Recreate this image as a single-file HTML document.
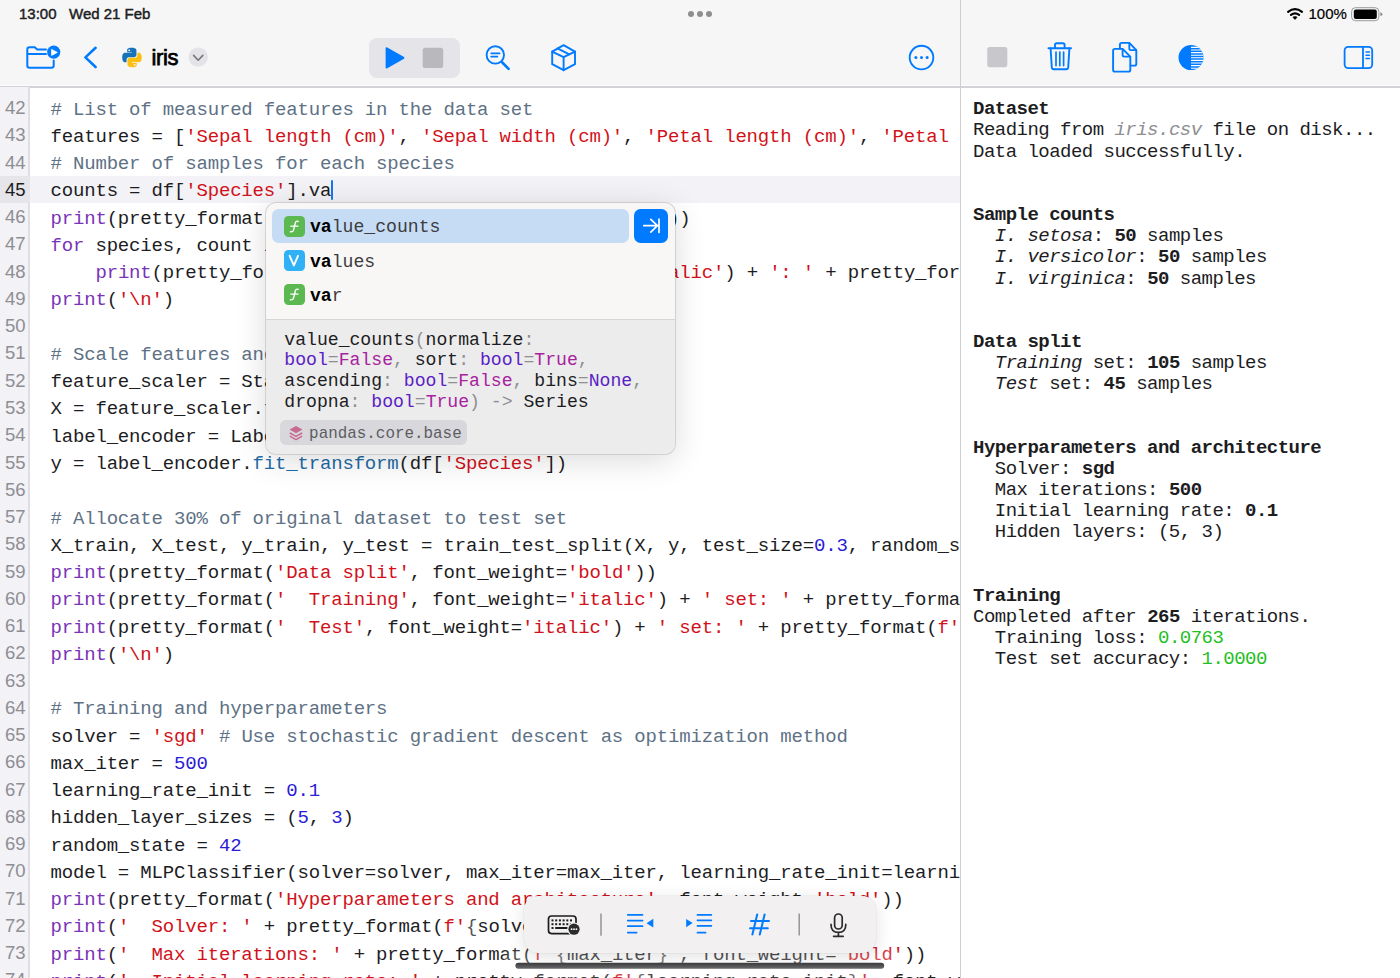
<!DOCTYPE html>
<html><head><meta charset="utf-8">
<style>
*{margin:0;padding:0;box-sizing:border-box}
html,body{width:1400px;height:978px;overflow:hidden;background:#fff}
body{position:relative;font-family:"Liberation Sans",sans-serif;color:#1d1d1f}
.abs{position:absolute}
#hdr{position:absolute;left:0;top:0;width:1400px;height:86px;background:#f6f6f6}
#hdrline{position:absolute;left:0;top:86px;width:1400px;height:1.6px;background:#d3d3d7;border-top:0}
#hdrw{position:absolute;left:0;top:85px;width:1400px;height:1px;background:#fdfdfd}
#vdiv{position:absolute;left:960px;top:0;width:1px;height:978px;background:#cfcfcf}
#gutter{position:absolute;left:0;top:87px;width:28px;height:891px;background:#f2f2f7}
#gutline{position:absolute;left:28px;top:87px;width:2px;height:891px;background:#dedee3}
#curline{position:absolute;left:30px;top:176px;width:930px;height:27px;background:#f2f2f7}
#curgut{position:absolute;left:0;top:176px;width:30px;height:27px;background:#e5e5ea}
#code{position:absolute;left:0;top:0;width:960px;height:978px;overflow:hidden}
.ln{position:absolute;left:50.5px;white-space:pre;font-family:"Liberation Mono",monospace;font-size:19px;letter-spacing:-0.175px;line-height:27.29px;height:27.29px;color:#1d1d1f}
.gn{position:absolute;left:0;width:25.5px;margin-top:-2.5px;text-align:right;font-family:"Liberation Sans",sans-serif;font-size:18.5px;line-height:27.29px;color:#8e8e93}
.gn.cur{color:#1c1c1e}
.cm{color:#5e7185}
.st{color:#d1121a}
.kw{color:#7933b8}
.nu{color:#2a1bd6}
.fn{color:#1f6aa5}
.br{color:#555}
#out{position:absolute;left:961px;top:87px;width:439px;height:891px;overflow:hidden}
.ol{position:absolute;left:12px;white-space:pre;font-family:"Liberation Mono",monospace;font-size:19px;letter-spacing:-0.52px;line-height:21.115px;color:#1d1d1f}
.ol b{font-weight:bold}
.ol i{font-style:italic}
.ol i.g{color:#8e8e93}
.ol .gr{color:#1fbf24}
.st-text{position:absolute;font-size:15px;font-weight:normal;-webkit-text-stroke:0.45px #1d1d1f;color:#1d1d1f;top:5px}

#popup{position:absolute;left:265.5px;top:202.5px;width:409.5px;height:251.5px;border-radius:10px;background:#f8f7f6;box-shadow:0 0 0 0.8px rgba(0,0,0,0.15),0 6px 32px rgba(0,0,0,0.15);overflow:hidden}
#popdoc{position:absolute;left:0;top:116px;width:100%;height:136px;background:#ececec;border-top:1px solid #d6d6d6}
.pi{position:absolute;font-family:"Liberation Mono",monospace;font-size:18.13px;line-height:22px;white-space:pre;color:#3c3c3f}
.pi b{color:#000;font-weight:bold}
.pic{position:absolute;width:21px;height:21px;border-radius:4.5px;color:#fff;text-align:center}
.sig{position:absolute;left:18.8px;font-family:"Liberation Mono",monospace;font-size:18.13px;line-height:20.7px;white-space:pre;color:#1d1d1f}
.sig .g{color:#8e8e93}.sig .t{color:#5a1ec4}.sig .v{color:#a8229e}
#kbd{position:absolute;left:523.6px;top:896.1px;width:352.8px;height:56.6px;border-radius:14px;background:#f2f0f0;box-shadow:0 0 0 0.5px rgba(0,0,0,0.06),0 4px 18px rgba(0,0,0,0.12)}
</style></head><body>
<div id="hdr"></div>
<div id="hdrw"></div><div id="hdrline"></div>

<svg class="abs" style="left:0;top:0" width="1400" height="86" viewBox="0 0 1400 86">
<g fill="none" stroke="#007aff" stroke-width="2" stroke-linecap="round" stroke-linejoin="round">
 <!-- folder -->
 <path d="M46 49.6 H37.3 L34.8 47.2 H29.5 Q27.3 47.2 27.3 49.4 V65.6 Q27.3 67.8 29.5 67.8 H51.5 Q53.7 67.8 53.7 65.6 V60.5"/>
 <path d="M27.8 54 H46"/>
 <!-- back chevron -->
 <path d="M95.6 47.8 L85.4 57.4 L95.6 67" stroke-width="2.6"/>
 <!-- magnifier -->
 <circle cx="495.3" cy="54.9" r="8.7" stroke-width="1.9"/>
 <path d="M491.2 53.3 H499.6 M491.2 56.7 H497.4" stroke-width="1.7"/>
 <path d="M502.3 62.5 L508.6 68.8" stroke-width="2.6"/>
 <!-- cube -->
 <path d="M563.6 45.2 L575 51.6 V64.2 L563.6 70.2 L552.2 64.2 V51.6 Z" stroke-width="1.9"/>
 <path d="M552.2 51.6 L563.6 57.2 L575 51.6 M563.6 57.2 V70.2" stroke-width="1.9"/>
 <path d="M557.5 48.4 L569.3 54.3" stroke-width="1.9"/>
 <!-- ellipsis circle -->
 <circle cx="921.5" cy="57.6" r="11.8" stroke-width="1.9"/>
 <!-- trash -->
 <path d="M1048.5 48.2 H1071" stroke-width="2"/>
 <path d="M1055 48 V45 Q1055 43.2 1056.8 43.2 H1062.8 Q1064.6 43.2 1064.6 45 V48" stroke-width="1.9"/>
 <path d="M1050.6 48.5 L1051.8 67.4 Q1052 69.2 1053.8 69.2 H1066.2 Q1068 69.2 1068.2 67.4 L1069.4 48.5" stroke-width="1.9"/>
 <path d="M1056 52 V65.6 M1059.8 52 V65.6 M1063.6 52 V65.6" stroke-width="1.7"/>
 <!-- copy -->
 <path d="M1130.6 65.6 H1134.4 Q1136.3 65.6 1136.3 63.7 V50.2 L1129.3 42.9 H1121.8 Q1119.9 42.9 1119.9 44.8 V48.6" stroke-width="1.9"/>
 <path d="M1129.3 43.2 V48.6 Q1129.3 50.2 1130.9 50.2 H1136" stroke-width="1.8"/>
 <path d="M1115 48.9 H1122.6 L1130.3 56.6 V69.7 Q1130.3 71.6 1128.4 71.6 H1115 Q1113.1 71.6 1113.1 69.7 V50.8 Q1113.1 48.9 1115 48.9 Z" stroke-width="1.9"/>
 <path d="M1122.6 49.2 V55 Q1122.6 56.6 1124.2 56.6 H1130" stroke-width="1.8"/>
 <!-- sidebar -->
 <rect x="1344.6" y="46.8" width="27.6" height="21.4" rx="3.6" stroke-width="1.8"/>
 <path d="M1363 47 V68" stroke-width="1.8"/>
 <path d="M1366 51.9 H1369.4 M1366 55.3 H1369.4 M1366 58.6 H1369.4" stroke-width="1.5"/>
</g>
<!-- folder badge -->
<circle cx="53.7" cy="52.1" r="6.6" fill="#007aff"/>
<path d="M51.6 49.4 L57.3 52.4 L51.6 55.4 Z" fill="#fff" stroke="#fff" stroke-width="0.8" stroke-linejoin="round"/>
<!-- ellipsis dots -->
<circle cx="915.9" cy="57.6" r="1.5" fill="#007aff"/><circle cx="921.5" cy="57.6" r="1.5" fill="#007aff"/><circle cx="927.1" cy="57.6" r="1.5" fill="#007aff"/>
<!-- python logo -->
<g transform="translate(122.2 47.8) scale(0.195)">
 <path fill="#1673b9" d="M49 0C24 0 25.5 11 25.5 11V22.5H49.5V26H16C16 26 0 24 0 49.5S14 74 14 74H22.5V62S22 48.5 36 48.5H60S73 48.7 73 36V14S75 0 49 0ZM36 8.5A4.3 4.3 0 1 1 36 17 4.3 4.3 0 1 1 36 8.5Z"/>
 <path fill="#fdbf12" d="M51 100C76 100 74.5 89 74.5 89V77.5H50.5V74H84C84 74 100 76 100 50.5S86 26 86 26H77.5V38S78 51.5 64 51.5H40S27 51.3 27 64V86S25 100 51 100ZM64 91.5A4.3 4.3 0 1 1 64 83 4.3 4.3 0 1 1 64 91.5Z"/>
</g>
<!-- chevron circle -->
<circle cx="198.2" cy="57.1" r="9.7" fill="#e3e3e8"/>
<path d="M193.6 55.4 L198.2 60.2 L202.8 55.4" fill="none" stroke="#77777c" stroke-width="1.6" stroke-linecap="round" stroke-linejoin="round"/>
<!-- run group -->
<rect x="369" y="38" width="91" height="40" rx="8" fill="#e4e4e9"/>
<path d="M387.3 47.6 L404 57.1 Q405 57.9 404 58.7 L387.3 68.2 Q385.6 69 385.6 67.2 V48.6 Q385.6 46.8 387.3 47.6 Z" fill="#007aff"/>
<rect x="422.7" y="47.7" width="20.5" height="20.3" rx="2.5" fill="#b9b9bd"/>
<!-- right panel stop -->
<rect x="987.3" y="47" width="20" height="20.3" rx="2.5" fill="#c7c7cc"/>
<!-- contrast -->
<defs><clipPath id="cc"><circle cx="1191" cy="57.6" r="12.5"/></clipPath></defs>
<g clip-path="url(#cc)">
 <rect x="1178" y="44" width="26" height="28" fill="#007aff"/>
 <path d="M1191 47.4 H1205 M1191 50.0 H1205 M1191 52.6 H1205 M1191 55.2 H1205 M1191 57.8 H1205 M1191 60.4 H1205 M1191 63.0 H1205 M1191 65.6 H1205 M1191 68.2 H1205" stroke="#fff" stroke-width="1.1"/>
</g>
<!-- wifi -->
<path d="M1292.9 17.1 Q1295 15.9 1297.1 17.1 L1295.4 19.2 Q1295 19.6 1294.6 19.2 Z" fill="#000" stroke="#000" stroke-width="0.6" stroke-linejoin="round"/>
<path d="M1291 14.8 Q1295 11.8 1299.1 14.8" fill="none" stroke="#000" stroke-width="2.2" stroke-linecap="round"/>
<path d="M1288.1 11.8 Q1295 6.4 1302 11.8" fill="none" stroke="#000" stroke-width="2.2" stroke-linecap="round"/>
<!-- battery -->
<rect x="1351.6" y="7.7" width="27.3" height="13" rx="3.8" fill="none" stroke="#9a9a9a" stroke-width="1"/>
<rect x="1353.8" y="9.6" width="23" height="9.3" rx="2" fill="#000"/>
<path d="M1380.4 12.3 Q1382.4 12.6 1382.4 14.2 Q1382.4 15.8 1380.4 16.1 Z" fill="#8a8a8a"/>
</svg>
<div class="abs" style="left:151.5px;top:44.5px;font-size:22px;font-weight:normal;letter-spacing:-0.35px;-webkit-text-stroke:0.75px #000;color:#000">iris</div>
<div class="st-text" style="left:1308.5px;font-size:15px;color:#000;-webkit-text-stroke:0.2px #000">100%</div>

<!-- status bar -->
<div class="st-text" style="left:19px">13:00</div>
<div class="st-text" style="left:69px">Wed 21 Feb</div>
<div class="abs" style="left:688px;top:11px;width:6px;height:6px;border-radius:3px;background:#8e8e8e"></div>
<div class="abs" style="left:697px;top:11px;width:6px;height:6px;border-radius:3px;background:#8e8e8e"></div>
<div class="abs" style="left:706px;top:11px;width:6px;height:6px;border-radius:3px;background:#8e8e8e"></div>

<div id="code">
<div id="gutter"></div>
<div id="gutline"></div>
<div id="curgut"></div>
<div id="curline"></div>
<div class="gn" style="top:96.60px">42</div>
<div class="gn" style="top:123.86px">43</div>
<div class="gn" style="top:151.12px">44</div>
<div class="gn cur" style="top:178.39px">45</div>
<div class="gn" style="top:205.65px">46</div>
<div class="gn" style="top:232.91px">47</div>
<div class="gn" style="top:260.17px">48</div>
<div class="gn" style="top:287.43px">49</div>
<div class="gn" style="top:314.70px">50</div>
<div class="gn" style="top:341.96px">51</div>
<div class="gn" style="top:369.22px">52</div>
<div class="gn" style="top:396.48px">53</div>
<div class="gn" style="top:423.74px">54</div>
<div class="gn" style="top:451.01px">55</div>
<div class="gn" style="top:478.27px">56</div>
<div class="gn" style="top:505.53px">57</div>
<div class="gn" style="top:532.79px">58</div>
<div class="gn" style="top:560.05px">59</div>
<div class="gn" style="top:587.32px">60</div>
<div class="gn" style="top:614.58px">61</div>
<div class="gn" style="top:641.84px">62</div>
<div class="gn" style="top:669.10px">63</div>
<div class="gn" style="top:696.36px">64</div>
<div class="gn" style="top:723.63px">65</div>
<div class="gn" style="top:750.89px">66</div>
<div class="gn" style="top:778.15px">67</div>
<div class="gn" style="top:805.41px">68</div>
<div class="gn" style="top:832.67px">69</div>
<div class="gn" style="top:859.94px">70</div>
<div class="gn" style="top:887.20px">71</div>
<div class="gn" style="top:914.46px">72</div>
<div class="gn" style="top:941.72px">73</div>
<div class="gn" style="top:968.98px">74</div>
<div class="ln" style="top:96.60px"><span class="cm"># List of measured features in the data set</span></div>
<div class="ln" style="top:123.86px">features = [<span class="st">'Sepal length (cm)'</span>, <span class="st">'Sepal width (cm)'</span>, <span class="st">'Petal length (cm)'</span>, <span class="st">'Petal width (cm)'</span>]</div>
<div class="ln" style="top:151.12px"><span class="cm"># Number of samples for each species</span></div>
<div class="ln" style="top:178.39px">counts = df[<span class="st">'Species'</span>].va</div>
<div class="ln" style="top:205.65px"><span class="kw">print</span>(pretty_format(<span class="st">'Sample counts'</span>, font_weight=<span class="st">'bold'</span>))</div>
<div class="ln" style="top:232.91px"><span class="kw">for</span> species, count <span class="kw">in</span> counts.items():</div>
<div class="ln" style="top:260.17px">    <span class="kw">print</span>(pretty_format(<span class="st">f'</span><span class="st">I.</span><span class="br">{</span>species<span class="br">}</span><span class="st">'</span>, font_weight=<span class="st">'italic'</span>) + <span class="st">': '</span> + pretty_format(<span class="st">f'</span><span class="br">{</span>count<span class="br">}</span><span class="st">'</span>, font_weight=<span class="st">'bold'</span>) + <span class="st">' samples'</span>)</div>
<div class="ln" style="top:287.43px"><span class="kw">print</span>(<span class="st">'\n'</span>)</div>
<div class="ln" style="top:314.70px"></div>
<div class="ln" style="top:341.96px"><span class="cm"># Scale features and encode labels</span></div>
<div class="ln" style="top:369.22px">feature_scaler = StandardScaler()</div>
<div class="ln" style="top:396.48px">X = feature_scaler.<span class="fn">fit_transform</span>(df[features])</div>
<div class="ln" style="top:423.74px">label_encoder = LabelEncoder()</div>
<div class="ln" style="top:451.01px">y = label_encoder.<span class="fn">fit_transform</span>(df[<span class="st">'Species'</span>])</div>
<div class="ln" style="top:478.27px"></div>
<div class="ln" style="top:505.53px"><span class="cm"># Allocate 30% of original dataset to test set</span></div>
<div class="ln" style="top:532.79px">X_train, X_test, y_train, y_test = train_test_split(X, y, test_size=<span class="nu">0.3</span>, random_state=random_state)</div>
<div class="ln" style="top:560.05px"><span class="kw">print</span>(pretty_format(<span class="st">'Data split'</span>, font_weight=<span class="st">'bold'</span>))</div>
<div class="ln" style="top:587.32px"><span class="kw">print</span>(pretty_format(<span class="st">'  Training'</span>, font_weight=<span class="st">'italic'</span>) + <span class="st">' set: '</span> + pretty_format(<span class="st">f'</span><span class="br">{</span>len(X_train)<span class="br">}</span><span class="st">'</span>, font_weight=<span class="st">'bold'</span>) + <span class="st">' samples'</span>)</div>
<div class="ln" style="top:614.58px"><span class="kw">print</span>(pretty_format(<span class="st">'  Test'</span>, font_weight=<span class="st">'italic'</span>) + <span class="st">' set: '</span> + pretty_format(<span class="st">f'</span><span class="br">{</span>len(X_test)<span class="br">}</span><span class="st">'</span>, font_weight=<span class="st">'bold'</span>) + <span class="st">' samples'</span>)</div>
<div class="ln" style="top:641.84px"><span class="kw">print</span>(<span class="st">'\n'</span>)</div>
<div class="ln" style="top:669.10px"></div>
<div class="ln" style="top:696.36px"><span class="cm"># Training and hyperparameters</span></div>
<div class="ln" style="top:723.63px">solver = <span class="st">'sgd'</span> <span class="cm"># Use stochastic gradient descent as optimization method</span></div>
<div class="ln" style="top:750.89px">max_iter = <span class="nu">500</span></div>
<div class="ln" style="top:778.15px">learning_rate_init = <span class="nu">0.1</span></div>
<div class="ln" style="top:805.41px">hidden_layer_sizes = (<span class="nu">5</span>, <span class="nu">3</span>)</div>
<div class="ln" style="top:832.67px">random_state = <span class="nu">42</span></div>
<div class="ln" style="top:859.94px">model = MLPClassifier(solver=solver, max_iter=max_iter, learning_rate_init=learning_rate_init, hidden_layer_sizes=hidden_layer_sizes)</div>
<div class="ln" style="top:887.20px"><span class="kw">print</span>(pretty_format(<span class="st">'Hyperparameters and architecture'</span>, font_weight=<span class="st">'bold'</span>))</div>
<div class="ln" style="top:914.46px"><span class="kw">print</span>(<span class="st">'  Solver: '</span> + pretty_format(<span class="st">f'</span><span class="br">{</span>solver<span class="br">}</span><span class="st">'</span>, font_weight=<span class="st">'bold'</span>))</div>
<div class="ln" style="top:941.72px"><span class="kw">print</span>(<span class="st">'  Max iterations: '</span> + pretty_format(<span class="st">f'</span><span class="br">{</span>max_iter<span class="br">}</span><span class="st">'</span>, font_weight=<span class="st">'bold'</span>))</div>
<div class="ln" style="top:968.98px"><span class="kw">print</span>(<span class="st">'  Initial learning rate: '</span> + pretty_format(<span class="st">f'</span><span class="br">{</span>learning_rate_init<span class="br">}</span><span class="st">'</span>, font_weight=<span class="st">'bold'</span>))</div>
</div>
<div id="vdiv"></div>

<div id="popup">
 <div class="abs" style="left:6.6px;top:6.8px;width:356.8px;height:33.6px;border-radius:6.5px;background:#c6dcf5"></div>
 <div class="abs" style="left:368.4px;top:6.8px;width:34.3px;height:33.6px;border-radius:6.5px;background:#007aff"></div>
 <svg class="abs" style="left:368.4px;top:6.8px" width="35" height="34"><path d="M9.8 16.7 H24.8 M16.8 10.4 L23.4 16.7 L16.8 23.1 M25 10.2 V23.4" fill="none" stroke="#fff" stroke-width="1.7" stroke-linecap="round" stroke-linejoin="round"/></svg>
 <div class="pic" style="left:18.4px;top:13.2px;background:#5cb851"></div>
 <div class="pic" style="left:18.4px;top:47.2px;background:#30b0f5"></div>
 <div class="pic" style="left:18.4px;top:81.4px;background:#5cb851"></div>
 <svg class="abs" style="left:18.4px;top:13.2px" width="21" height="21"><path d="M14.2 5.4 Q12 4.6 11.3 7 L9.6 13.8 Q9 16.2 6.4 15.8 M6.8 10.1 H14" fill="none" stroke="#fff" stroke-width="1.4" stroke-linecap="round"/></svg>
 <svg class="abs" style="left:18.4px;top:47.2px" width="21" height="21"><path d="M5.6 5.8 L9.9 15.4 L14 5.8" fill="none" stroke="#fff" stroke-width="1.9" stroke-linecap="round" stroke-linejoin="round"/></svg>
 <svg class="abs" style="left:18.4px;top:81.4px" width="21" height="21"><path d="M14.2 5.4 Q12 4.6 11.3 7 L9.6 13.8 Q9 16.2 6.4 15.8 M6.8 10.1 H14" fill="none" stroke="#fff" stroke-width="1.4" stroke-linecap="round"/></svg>
 <div class="pi" style="left:44.5px;top:13.6px"><b>va</b>lue_counts</div>
 <div class="pi" style="left:44.5px;top:48px"><b>va</b>lues</div>
 <div class="pi" style="left:44.5px;top:82px"><b>va</b>r</div>
 <div id="popdoc">
  <div class="sig" style="top:10px">value_counts<span class="g">(</span>normalize<span class="g">:</span>
<span class="t">bool</span><span class="g">=</span><span class="v">False</span><span class="g">,</span> sort<span class="g">:</span> <span class="t">bool</span><span class="g">=</span><span class="v">True</span><span class="g">,</span>
ascending<span class="g">:</span> <span class="t">bool</span><span class="g">=</span><span class="v">False</span><span class="g">,</span> bins<span class="g">=</span><span class="t">None</span><span class="g">,</span>
dropna<span class="g">:</span> <span class="t">bool</span><span class="g">=</span><span class="v">True</span><span class="g">)</span> <span class="g">-&gt;</span> Series</div>
  <div class="abs" style="left:14.7px;top:100.7px;width:186.6px;height:25px;border-radius:6px;background:#d7d7dc"></div>
  <svg class="abs" style="left:22px;top:104px" width="16" height="18"><path d="M8 2 L14.5 5.6 L8 9.2 L1.5 5.6 Z" fill="#c96b90"/><path d="M1.8 9 L8 12.4 L14.2 9 M1.8 12.2 L8 15.6 L14.2 12.2" fill="none" stroke="#c96b90" stroke-width="1.5" stroke-linejoin="round"/></svg>
  <div class="abs" style="left:43.6px;top:103.3px;font-family:'Liberation Mono',monospace;font-size:15.9px;line-height:22px;color:#5d5d62;white-space:pre">pandas.core.base</div>
 </div>
</div>
<div class="abs" style="left:330.5px;top:180px;width:2.6px;height:20px;border-radius:1.3px;background:#1a73e8"></div>
<div class="abs" style="left:505px;top:950px;width:390px;height:28px;background:rgba(255,255,255,0.25);filter:blur(4px)"></div>
<div id="kbd"></div>
<svg class="abs" style="left:515px;top:890px" width="380" height="88" viewBox="515 890 380 88">
 <!-- keyboard icon -->
 <rect x="548.5" y="916" width="27.5" height="17.6" rx="3" fill="none" stroke="#1d1d1f" stroke-width="1.7"/>
 <g fill="#1d1d1f">
  <rect x="551.5" y="919.4" width="2" height="2"/><rect x="555.2" y="919.4" width="2" height="2"/><rect x="558.9" y="919.4" width="2" height="2"/><rect x="562.6" y="919.4" width="2" height="2"/><rect x="566.3" y="919.4" width="2" height="2"/><rect x="570" y="919.4" width="2" height="2"/>
  <rect x="551.5" y="923.2" width="2" height="2"/><rect x="555.2" y="923.2" width="2" height="2"/><rect x="558.9" y="923.2" width="2" height="2"/><rect x="562.6" y="923.2" width="2" height="2"/><rect x="566.3" y="923.2" width="2" height="2"/><rect x="570" y="923.2" width="2" height="2"/>
  <rect x="551.5" y="927" width="2" height="2"/><rect x="555.2" y="927" width="15" height="2"/>
 </g>
 <circle cx="574" cy="929.2" r="6.8" fill="#f2f0f0"/>
 <circle cx="574" cy="929.2" r="5.6" fill="#2c2c2e"/>
 <circle cx="571.6" cy="929.2" r="0.9" fill="#fff"/><circle cx="574" cy="929.2" r="0.9" fill="#fff"/><circle cx="576.4" cy="929.2" r="0.9" fill="#fff"/>
 <path d="M601 913.5 V935.8 M799.2 913.4 V935.6" stroke="#8e8e93" stroke-width="1.4"/>
 <!-- outdent -->
 <g stroke="#007aff" stroke-width="1.8" stroke-linecap="round">
  <path d="M627.8 914.8 H642.5 M627.8 920.6 H642.5 M627.8 926.2 H642.5 M627.8 932.6 H636.6"/>
  <path d="M697.5 914.9 H711.3 M697.5 920.3 H711.3 M697.5 925.9 H711.3 M697.5 932.7 H705.5"/>
 </g>
 <path d="M653.3 918.8 V927.6 L646.6 923.2 Z" fill="#007aff"/>
 <path d="M686.2 919 V927.2 L692.6 923.1 Z" fill="#007aff"/>
 <!-- hash -->
 <g stroke="#007aff" stroke-width="2" stroke-linecap="round">
  <path d="M757.2 914.5 L752.4 934.6 M764.6 914.5 L759.8 934.6 M751 921 H769 M750 928.2 H767.8"/>
 </g>
 <!-- mic -->
 <rect x="834.6" y="914" width="7.6" height="15" rx="3.8" fill="none" stroke="#2c2c2e" stroke-width="1.7"/>
 <path d="M831 924.4 Q831 932.4 838.4 932.4 Q845.8 932.4 845.8 924.4 M838.4 932.4 V936 M833.6 936.3 H843.2" fill="none" stroke="#2c2c2e" stroke-width="1.7" stroke-linecap="round"/>
 <!-- home bar -->
 <defs><linearGradient id="hb" x1="0" y1="0" x2="0" y2="1"><stop offset="0" stop-color="#3a3a3c"/><stop offset="1" stop-color="#6a6a6c"/></linearGradient></defs><rect x="515.4" y="962.8" width="368.8" height="6" rx="3" fill="url(#hb)"/>
</svg>

<div id="out">
<div class="ol" style="top:12.30px"><b>Dataset</b></div>
<div class="ol" style="top:33.45px">Reading from <i class="g">iris.csv</i> file on disk...</div>
<div class="ol" style="top:54.60px">Data loaded successfully.</div>
<div class="ol" style="top:75.75px"></div>
<div class="ol" style="top:96.90px"></div>
<div class="ol" style="top:118.05px"><b>Sample counts</b></div>
<div class="ol" style="top:139.20px">  <i>I. setosa</i>: <b>50</b> samples</div>
<div class="ol" style="top:160.35px">  <i>I. versicolor</i>: <b>50</b> samples</div>
<div class="ol" style="top:181.50px">  <i>I. virginica</i>: <b>50</b> samples</div>
<div class="ol" style="top:202.65px"></div>
<div class="ol" style="top:223.80px"></div>
<div class="ol" style="top:244.95px"><b>Data split</b></div>
<div class="ol" style="top:266.10px">  <i>Training</i> set: <b>105</b> samples</div>
<div class="ol" style="top:287.25px">  <i>Test</i> set: <b>45</b> samples</div>
<div class="ol" style="top:308.40px"></div>
<div class="ol" style="top:329.55px"></div>
<div class="ol" style="top:350.70px"><b>Hyperparameters and architecture</b></div>
<div class="ol" style="top:371.85px">  Solver: <b>sgd</b></div>
<div class="ol" style="top:393.00px">  Max iterations: <b>500</b></div>
<div class="ol" style="top:414.15px">  Initial learning rate: <b>0.1</b></div>
<div class="ol" style="top:435.30px">  Hidden layers: (5, 3)</div>
<div class="ol" style="top:456.45px"></div>
<div class="ol" style="top:477.60px"></div>
<div class="ol" style="top:498.75px"><b>Training</b></div>
<div class="ol" style="top:519.90px">Completed after <b>265</b> iterations.</div>
<div class="ol" style="top:541.05px">  Training loss: <span class="gr">0.0763</span></div>
<div class="ol" style="top:562.20px">  Test set accuracy: <span class="gr">1.0000</span></div>
</div>

</body></html>
